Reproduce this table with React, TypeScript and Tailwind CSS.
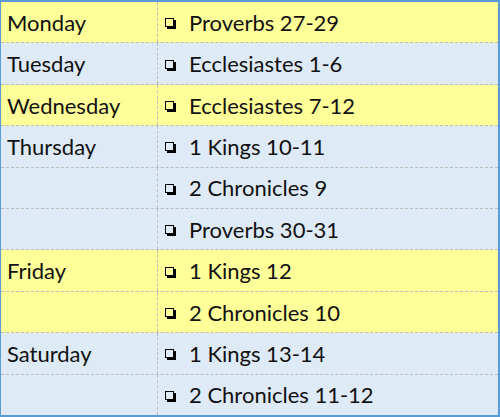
const rows: { day: string; reading: string; yellow: boolean }[] = [
  { day: 'Monday', reading: 'Proverbs 27-29', yellow: true },
  { day: 'Tuesday', reading: 'Ecclesiastes 1-6', yellow: false },
  { day: 'Wednesday', reading: 'Ecclesiastes 7-12', yellow: true },
  { day: 'Thursday', reading: '1 Kings 10-11', yellow: false },
  { day: '', reading: '2 Chronicles 9', yellow: false },
  { day: '', reading: 'Proverbs 30-31', yellow: false },
  { day: 'Friday', reading: '1 Kings 12', yellow: true },
  { day: '', reading: '2 Chronicles 10', yellow: true },
  { day: 'Saturday', reading: '1 Kings 13-14', yellow: false },
  { day: '', reading: '2 Chronicles 11-12', yellow: false },
]

export default function App() {
  return (
    <div
      className="w-[500px] h-[417px] border-2 border-l border-[#5b9bd5] flex flex-col text-[22px] text-[#111]"
      style={{ fontFamily: 'Lato, "Open Sans", sans-serif' }}
    >
      {rows.map((r, i) => (
        <div
          key={i}
          className={
            'flex flex-1 items-center ' +
            (r.yellow ? 'bg-[#ffff99] ' : 'bg-[#deeaf6] ') +
            (i < rows.length - 1 ? 'border-b border-dashed border-[#bcbcbc]' : '')
          }
        >
          <div className="w-[157px] h-full flex items-center pl-[6px] border-r border-dashed border-[#bcbcbc]">
            {r.day}
          </div>
          <div className="flex-1 flex items-center pl-[7px] gap-[15px]">
            <span className="w-[9px] h-[9px] mt-[1px] border border-black shadow-[2px_2px_0_#000] shrink-0" />
            <span>{r.reading}</span>
          </div>
        </div>
      ))}
    </div>
  )
}
